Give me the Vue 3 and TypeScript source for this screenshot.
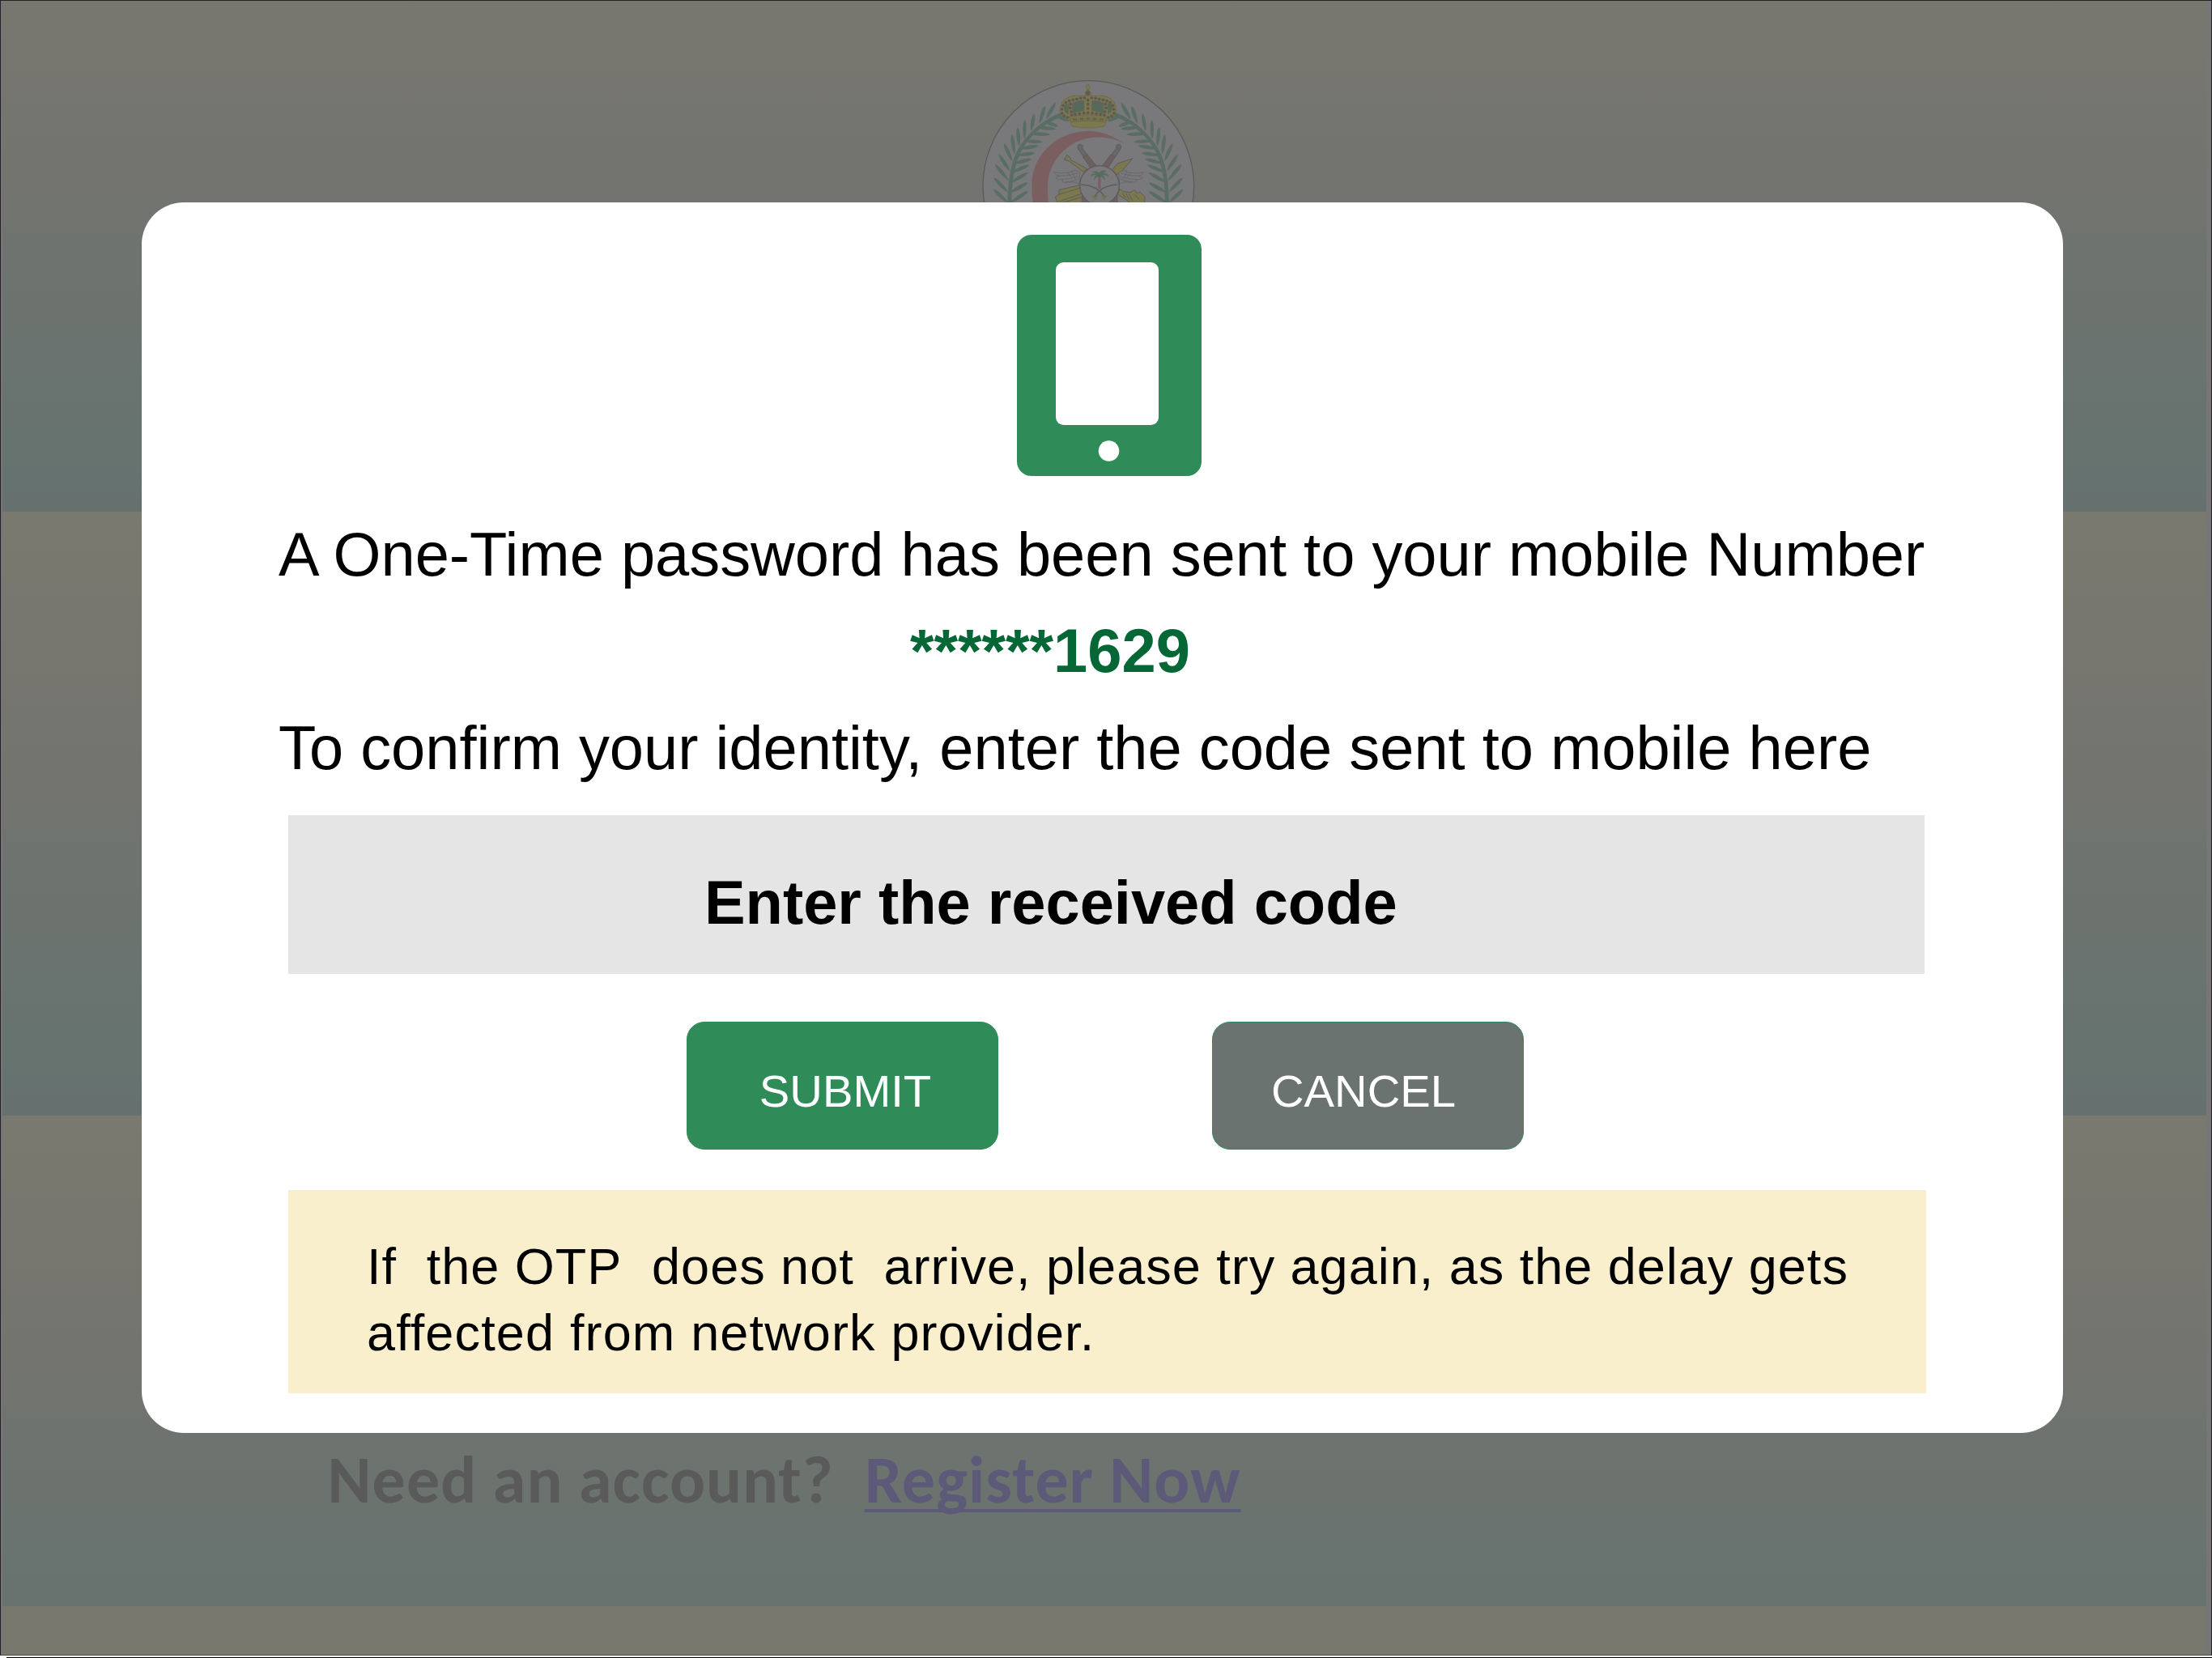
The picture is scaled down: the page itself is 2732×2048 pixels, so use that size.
<script setup lang="ts">
type Point = [number, number]
interface Leaf { base: Point; tip: Point }

const leaves: Leaf[] = [
  { base: [305, 203], tip: [341, 140] },
  { base: [281, 218], tip: [302, 153] },
  { base: [250, 246], tip: [262, 181] },
  { base: [226, 275], tip: [227, 204] },
  { base: [207, 302], tip: [200, 232] },
  { base: [189, 332], tip: [179, 258] },
  { base: [181, 358], tip: [150, 291] },
  { base: [172, 394], tip: [131, 332] },
  { base: [168, 430], tip: [117, 369] },
  { base: [165, 473], tip: [112, 418] },
  { base: [165, 512], tip: [111, 461] },
  { base: [338, 185], tip: [392, 210] },
  { base: [300, 208], tip: [350, 229] },
  { base: [268, 232], tip: [342, 238] },
  { base: [244, 256], tip: [321, 258] },
  { base: [224, 282], tip: [294, 286] },
  { base: [206, 312], tip: [278, 300] },
  { base: [196, 336], tip: [264, 327] },
  { base: [186, 366], tip: [252, 349] },
  { base: [180, 398], tip: [243, 371] },
  { base: [175, 436], tip: [239, 400] },
  { base: [172, 474], tip: [238, 437] },
  { base: [172, 512], tip: [240, 468] }
]

function leafPath({ base, tip }: Leaf): string {
  const dx = tip[0] - base[0]
  const dy = tip[1] - base[1]
  const len = Math.hypot(dx, dy)
  const nx = (-dy / len) * 9
  const ny = (dx / len) * 9
  const at = (t: number, s: number) =>
    `${(base[0] + dx * t + nx * s).toFixed(1)} ${(base[1] + dy * t + ny * s).toFixed(1)}`
  return `M${at(0, 0)}C${at(0.3, 1)} ${at(0.85, 1)} ${at(1, 0)}C${at(0.85, -1)} ${at(0.3, -1)} ${at(0, 0)}Z`
}

const beads: Point[] = [
  [461, 105], [461, 131], [461, 146], [461, 162],
  [448, 123], [434, 124], [420, 127], [406, 130], [392, 134], [379, 140], [369, 151], [365, 165], [365, 180], [373, 190], [385, 195],
  [475, 123], [489, 124], [503, 127], [517, 130], [531, 134], [543, 140], [553, 151], [557, 165], [557, 180], [549, 190], [537, 195],
  [397, 146], [395, 160], [399, 174], [526, 146], [528, 160], [524, 174],
  [401, 186], [414, 184], [430, 181], [446, 179], [461, 178], [477, 179], [493, 181], [508, 184], [522, 186]
]

const code: string = 'Enter the received code'
const notice: string[] = [
  'If\u00a0 the OTP\u00a0 does not\u00a0 arrive, please try again, as the delay gets',
  'affected from network provider.'
]
</script>

<template>
  <div class="screen">
    <div class="tiles">
      <div class="tile first"></div>
      <div class="tile second"></div>
      <div class="tile third"></div>
      <div class="tile rest"></div>
    </div>

    <div class="page">
      <svg class="emblem" viewBox="0 0 930 540">
        <circle cx="463" cy="450" r="391" fill="#79787a" stroke="#5c5a5d" stroke-width="4" />
        <g v-for="side in 2" :key="side" :transform="side === 2 ? 'translate(925 0) scale(-1 1)' : undefined" fill="#5a6d64">
          <path d="M364 176C300 200 245 245 207 305C178 352 163 420 163 540H178C177 430 190 365 218 313C250 258 305 213 372 188Z" />
          <path v-for="(leaf, i) in leaves" :key="i" :d="leafPath(leaf)" />
        </g>

        <path d="M595 291C540 262 470 262 420 285C350 320 312 385 312 450Q311 480 317 540H261Q252 480 253 440C256 330 350 246 462 245C515 246 560 266 595 291Z" fill="#7b5f60" />

        <g stroke="#6a6743" stroke-width="2">
          <path d="M362 190C350 160 362 128 395 118C420 110 440 118 450 114H473C485 118 505 110 530 118C563 128 572 160 560 190L530 208H394Z" fill="#7b7751" />
          <path d="M404 142Q424 131 447 133V170Q422 172 405 180ZM476 133Q500 131 519 142L518 180Q500 172 476 170ZM374 152Q380 142 389 146L388 182Q374 178 374 165ZM534 146Q546 142 550 155Q552 178 535 182Z" fill="#57695d" />
          <path d="M391 192Q461 178 533 192L526 214H398Z" fill="#77734f" />
          <path d="M397 214Q461 202 527 214L522 228Q461 240 402 228Z" fill="#7c784f" />
          <path d="M461 71L470 82L461 94L452 82ZM457 94H465L472 103V114H450V103Z" fill="#7b7751" />
        </g>
        <path d="M405 199L420 206M420 199L407 207M432 197L444 205M444 197L432 205M456 196L467 204M467 196L456 204M480 197L492 205M492 197L480 205M504 199L517 206M517 199L505 207" stroke="#5b584c" stroke-width="3" />
        <circle v-for="(b, i) in beads" :key="i" :cx="b[0]" :cy="b[1]" :r="i === 0 ? 8 : 5.500" fill="#5d5755" />

        <g stroke="#5f5b5d" stroke-width="3" stroke-linejoin="round">
          <path d="M443 342L458 332L495 378L472 384ZM562 342L547 332L512 378L534 384Z" fill="#6e5f60" />
          <path d="M425 312C420 300 426 294 434 295C443 297 444 305 440 309L459 333L445 342ZM582 312C587 300 581 294 573 295C564 297 564 305 567 309L548 333L562 342Z" fill="#68666a" />
          <path d="M383 334L397 346V352L459 386L444 397L393 358L374 352Z" fill="#7b7850" />
          <path d="M627 347L585 396L562 411L548 394L570 366Z" fill="#7b7850" />
          <path d="M430 446L354 464V480L340 490L348 512H440V466Z" fill="#7b7850" />
          <path d="M350 482L434 456M356 506L438 478M364 512L440 490" fill="none" />
          <path d="M578 460L592 470L617 473L635 464L642 476L655 472L672 490L670 512H620L572 480Z" fill="#7b7850" />
          <path d="M590 476L600 492M602 476L614 500M614 478L626 506M632 480L652 500" fill="none" />
          <path d="M440 484H454L456 512H438ZM554 484H570V512H552Z" fill="#6e5f60" />
        </g>
        <g fill="#79787a" stroke="#636165" stroke-width="2">
          <path d="M432 400Q418 388 401 393Q404 400 386 400Q360 405 335 398Q340 410 354 412Q342 414 342 420Q352 427 368 426Q362 433 372 436Q392 436 407 434L428 441Z" />
          <path d="M575 400Q588 388 604 393Q602 400 620 400Q645 405 669 398Q664 410 650 412Q662 414 662 420Q652 427 638 426Q644 433 634 436Q614 436 600 434L578 441Z" />
          <path d="M350 412Q390 413 424 402M362 425Q398 424 426 413M376 435Q404 433 426 424M654 412Q614 413 582 402M642 425Q606 424 580 413M628 435Q602 433 580 424M386 400L402 420M400 395L414 422M620 400L604 420M606 395L592 422" fill="none" />
        </g>
        <circle cx="504" cy="447" r="73" fill="#79787a" stroke="#5c5a5d" stroke-width="4" />
        <path d="M499 415H508L509 459H498Z" fill="#7c6061" />
        <path d="M503 416Q490 413 483 431Q482 416 492 408Q477 406 470 417Q472 402 490 403Q481 395 474 398Q486 388 503 400Q510 386 532 396Q524 396 517 402Q535 400 539 417Q530 407 515 408Q526 416 524 430Q516 415 507 414L505 428Z" fill="#566c5f" />
        <path d="M435 444Q500 448 524 492M570 444Q506 448 484 492" fill="none" stroke="#5e5c60" stroke-width="5" />
        <path d="M476 486L492 498M482 500L496 484M532 486L516 498M526 500L512 484" stroke="#77734f" stroke-width="7" />
      </svg>

      <p class="account">
        <span class="ask">Need an account?</span>
        <a class="register">Register Now</a>
      </p>
    </div>

    <div class="edge bottom"></div>

    <section class="modal">
      <svg class="device" viewBox="0 0 228 298">
        <rect width="228" height="298" rx="18" fill="#2f8b58" />
        <rect x="48" y="34" width="127" height="201" rx="9.500" fill="#fff" />
        <circle cx="113.500" cy="267" r="12.800" fill="#fff" />
      </svg>
      <p class="line sent">A One-Time password has been sent to your mobile Number</p>
      <p class="line phone">******1629</p>
      <p class="line confirm">To confirm your identity, enter the code sent to mobile here</p>
      <div class="field">{{ code }}</div>
      <div class="actions">
        <button class="submit">SUBMIT</button>
        <button class="cancel">CANCEL</button>
      </div>
      <div class="notice">
        <p v-for="text in notice" :key="text">{{ text }}</p>
      </div>
    </section>
  </div>
</template>

<style>
body { margin: 0; background: #fff; overflow: hidden; }
</style>

<style scoped>
.screen {
  position: relative;
  width: 2732px;
  height: 2048px;
  overflow: hidden;
  font-family: "Liberation Sans", Arial, sans-serif;
  background: #fff;
}
p { margin: 0; white-space: pre; }
.tiles {
  box-sizing: border-box;
  display: flex;
  flex-direction: column;
  height: 2045px;
  padding: 0 6px 0 2px;
  border: 1px solid #222225;
  border-bottom-color: #4f4e42;
  background: #777577;
}
.tile { background: linear-gradient(#79796f 0%, #77776f 20%, #74746f 43%, #6e736f 58%, #6a736f 74%, #66736f 90%, #66716f 100%); }
.first { height: 746px; margin-top: -115px; clip-path: inset(115px 0 0 0); }
.second { height: 746px; }
.third { height: 606px; background: linear-gradient(#79796f 0%, #77776f 25%, #74746f 48%, #6e736f 66%, #6a736f 83%, #67736f 100%); }
.rest { flex: 1; background: #78786f; }
.page {
  position: absolute;
  inset: 0;
  display: flex;
  flex-direction: column;
  justify-content: space-between;
}
.emblem { display: block; width: 310px; height: 180px; margin: 80px 0 0 1190px; }
.account {
  display: flex;
  gap: 38px;
  margin: 0 0 170px 404.500px;
  font: 700 82px/100px Carlito, Lato, sans-serif;
}
.ask { color: #5a5a5a; letter-spacing: 1.050px; }
.register { color: #5c5a78; letter-spacing: 1px; text-decoration: underline; text-decoration-thickness: 4px; text-underline-offset: 8px; text-decoration-skip-ink: none; }
.edge.bottom { position: absolute; left: 8px; right: 0; bottom: 0; height: 1px; background: #000; }
.modal {
  position: absolute;
  left: 175px;
  top: 250px;
  box-sizing: border-box;
  width: 2373px;
  height: 1520px;
  padding: 40px 169.500px 0 181px;
  border-radius: 52px;
  background: #fff;
  display: flex;
  flex-direction: column;
}
.device { display: block; flex: none; width: 228px; height: 298px; margin: 0 0 37px 900px; }
.line { font-size: 75.850px; line-height: 119px; color: #000; }
.sent { margin-left: -12px; }
.phone { line-height: 120px; margin-left: 768px; font-weight: 700; color: #046735; }
.confirm { margin-left: -12px; }
.field {
  box-sizing: border-box;
  height: 196px;
  margin: 23.500px 1.500px 0 0;
  padding: 65.500px 0 0 514px;
  font-size: 75.850px;
  line-height: 85px;
  font-weight: 700;
  background: #e5e5e5;
}
.actions { display: flex; gap: 263.500px; margin: 59.500px 0 50px 492px; }
button {
  box-sizing: border-box;
  width: 385px;
  height: 157.500px;
  border: 1px solid #2f8b58;
  border-radius: 22px;
  padding: 15px 0 0;
  font: 56.200px/64px "Liberation Sans", Arial, sans-serif;
  color: #fff;
}
.submit { background: #2f8b58; padding-left: 7px; }
.cancel { background: #6a736f; padding-right: 10px; }
.notice {
  box-sizing: border-box;
  height: 251.500px;
  padding: 53px 0 0 97px;
  font-size: 63px;
  line-height: 82px;
  letter-spacing: 1.150px;
  background: #faefcd;
}
.notice p:first-child { letter-spacing: 1.030px; word-spacing: -0.200px; }
</style>
